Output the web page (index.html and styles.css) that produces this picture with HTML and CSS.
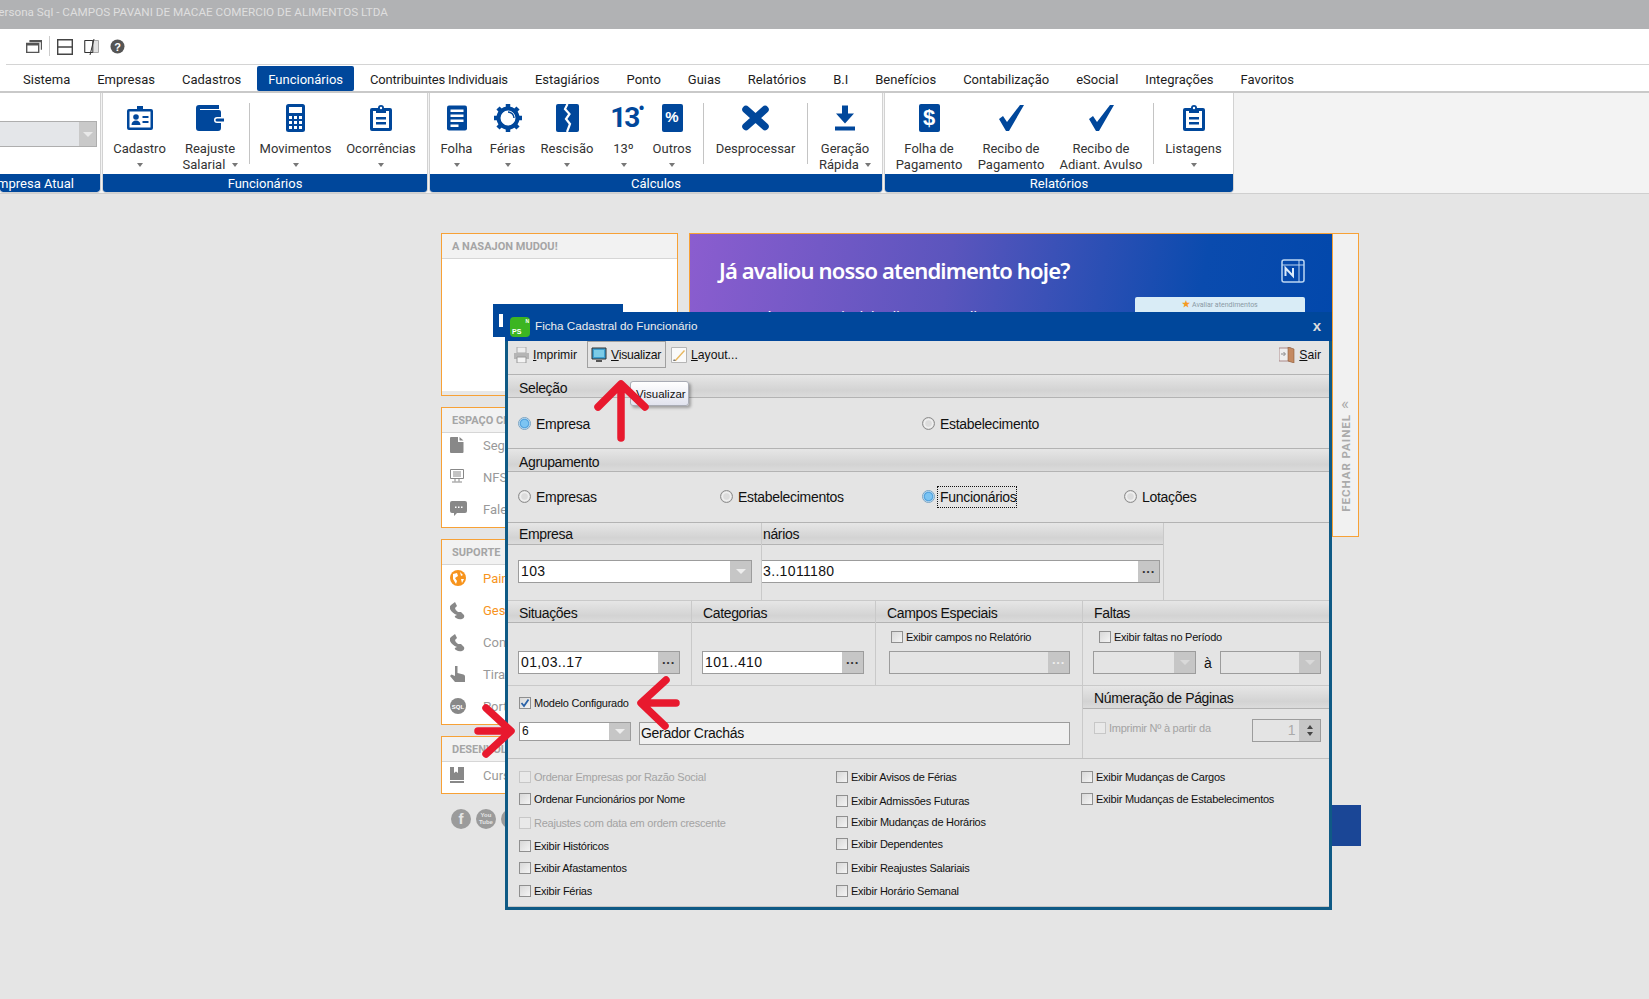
FILE: index.html
```html
<!DOCTYPE html>
<html lang="pt-BR">
<head>
  <meta charset="UTF-8" />
  <title>Persona Sql</title>
  <link rel="stylesheet" href="styles.css">
</head>
<body>
  <div class="titlebar"><span>Persona Sql - CAMPOS PAVANI DE MACAE COMERCIO DE ALIMENTOS LTDA</span></div>

  <div class="quickbar">
    <svg class="qicon" width="16" height="13" viewBox="0 0 16 13"><path d="M3.5 .7h12v9M.7 3.5h12v9H.7z" fill="none" stroke="#555" stroke-width="1.4"/><path d="M.7 3.5h12v2H.7zM3.5 .7h12v1.5h-12z" fill="#555"/></svg>
    <i class="qsep"></i>
    <svg class="qicon" width="16" height="16" viewBox="0 0 16 16"><path d="M.7.7h14.6v14.6H.7zM.7 8h14.6" fill="none" stroke="#444" stroke-width="1.4"/></svg>
    <svg class="qicon q-page" width="16" height="16" viewBox="0 0 16 16"><path d="M.5 1.5h14v12H.5z" fill="#e3e3e3" stroke="#aaa"/><path d="M.8 1.5h8v12h-8z" fill="#fff" stroke="#333"/><path d="M10 0 6 16" stroke="#333"/></svg>
    <svg class="qicon q-help" width="15" height="15" viewBox="0 0 15 15"><circle cx="7.5" cy="7.5" r="7" fill="#555"/><text x="7.5" y="11.5" class="q-help-mark">?</text></svg>
  </div>

  <nav class="menu">
    <a>Sistema</a><a>Empresas</a><a>Cadastros</a><a class="active">Funcionários</a><a class="tight">Contribuintes Individuais</a><a>Estagiários</a><a>Ponto</a><a>Guias</a><a>Relatórios</a><a>B.I</a><a>Benefícios</a><a>Contabilização</a><a>eSocial</a><a>Integrações</a><a>Favoritos</a>
  </nav>

  <div class="ribbon">
    <section class="group group-empresa">
      <div class="group-body">
        <div class="rib-combo"><b><i class="caret"></i></b></div>
      </div>
      <div class="group-label">Empresa Atual</div>
    </section>

    <section class="group group-func">
      <div class="group-body">
        <div class="rib-item">
          <svg width="26" height="24" viewBox="0 0 26 24"><path d="M10 0h6v3h8a2 2 0 0 1 2 2v17a2 2 0 0 1-2 2H2a2 2 0 0 1-2-2V5a2 2 0 0 1 2-2h8z" fill="#00479b"/><rect x="2.500" y="5.500" width="21" height="16" fill="#fff"/><circle cx="9" cy="11" r="2.800" fill="#00479b"/><path d="M4.500 19c0-3 2-4.500 4.500-4.500s4.500 1.500 4.500 4.500zM15.500 10h6v2h-6zM15.500 15h6v2h-6z" fill="#00479b"/></svg>
          <span>Cadastro</span><i class="caret"></i>
        </div>
        <div class="rib-item shift-left">
          <svg width="28" height="26" viewBox="0 0 28 26"><path d="M3 0h20v4H4v1h19a2 2 0 0 1 2 2v5h-4a3 3 0 0 0 0 6h4v5a3 3 0 0 1-3 3H3a3 3 0 0 1-3-3V3a3 3 0 0 1 3-3z" fill="#00479b"/><path d="M21 13.500h7v3h-7a1.500 1.500 0 0 1 0-3z" fill="#00479b"/></svg>
          <span>Reajuste<br>Salarial <i class="caret inline"></i></span>
        </div>
        <i class="rib-sep"></i>
        <div class="rib-item">
          <svg width="19" height="28" viewBox="0 0 19 28"><rect width="19" height="28" rx="2.500" fill="#00479b"/><rect x="3" y="3" width="13" height="6" fill="#fff"/><path d="M3 12h3v3H3zM8 12h3v3H8zM13 12h3v3h-3zM3 17h3v3H3zM8 17h3v3H8zM13 17h3v3h-3zM3 22h3v3H3zM8 22h3v3H8zM13 22h3v3h-3z" fill="#fff"/></svg>
          <span>Movimentos</span><i class="caret"></i>
        </div>
        <div class="rib-item">
          <svg width="22" height="26" viewBox="0 0 22 26"><use href="#clip"/></svg>
          <span>Ocorrências</span><i class="caret"></i>
        </div>
      </div>
      <div class="group-label">Funcionários</div>
    </section>

    <section class="group group-calc">
      <div class="group-body">
        <div class="rib-item">
          <svg width="20" height="25" viewBox="0 0 20 25"><rect width="20" height="25" rx="2" fill="#00479b"/><path d="M3.500 4h13v2.500h-13zM3.500 9h13v2.500h-13zM3.500 14h13v2.500h-13zM3.500 19h8v2.500h-8z" fill="#fff"/></svg>
          <span>Folha</span><i class="caret"></i>
        </div>
        <div class="rib-item">
          <svg width="28" height="28" viewBox="0 0 28 28"><circle cx="14" cy="14" r="9.500" fill="none" stroke="#00479b" stroke-width="4"/><path d="M14 0v6M14 22v6M0 14h6M22 14h6M4 4l4.500 4.500M19.500 19.500 24 24M24 4l-4.500 4.500M8.500 19.500 4 24" stroke="#00479b" stroke-width="4.500"/><path d="M14 8a6 6 0 0 1 6 6" fill="none" stroke="#00479b" stroke-width="1.500"/></svg>
          <span>Férias</span><i class="caret"></i>
        </div>
        <div class="rib-item">
          <svg width="23" height="28" viewBox="0 0 23 28"><rect width="23" height="28" rx="2" fill="#00479b"/><path d="M11.500 0 9 5l4.500 5L10 15l4 5-3 8" fill="none" stroke="#fff" stroke-width="2.200"/></svg>
          <span>Rescisão</span><i class="caret"></i>
        </div>
        <div class="rib-item">
          <div class="icon-13">13<sup>•</sup></div>
          <span>13º</span><i class="caret"></i>
        </div>
        <div class="rib-item shift-left-sm">
          <div class="icon-pct">%</div>
          <span>Outros</span><i class="caret"></i>
        </div>
        <i class="rib-sep"></i>
        <div class="rib-item">
          <svg width="27" height="25" viewBox="0 0 27 25"><path d="M4 4 23 21M23 4 4 21" stroke="#00479b" stroke-width="7.500" stroke-linecap="round"/></svg>
          <span>Desprocessar</span>
        </div>
        <i class="rib-sep"></i>
        <div class="rib-item">
          <svg width="20" height="25" viewBox="0 0 20 25"><path d="M7 0h6v8h6l-9 10L1 8h6zM0 21h20v4H0z" fill="#00479b"/></svg>
          <span>Geração<br>Rápida <i class="caret inline"></i></span>
        </div>
      </div>
      <div class="group-label">Cálculos</div>
    </section>

    <section class="group group-rel">
      <div class="group-body">
        <div class="rib-item">
          <div class="icon-dollar">$</div>
          <span>Folha de<br>Pagamento</span>
        </div>
        <div class="rib-item">
          <svg width="25" height="26" viewBox="0 0 25 26"><use href="#tick"/></svg>
          <span>Recibo de<br>Pagamento</span>
        </div>
        <div class="rib-item">
          <svg width="25" height="26" viewBox="0 0 25 26"><use href="#tick"/></svg>
          <span>Recibo de<br>Adiant. Avulso</span>
        </div>
        <i class="rib-sep"></i>
        <div class="rib-item">
          <svg width="22" height="26" viewBox="0 0 22 26"><use href="#clip"/></svg>
          <span>Listagens</span><i class="caret"></i>
        </div>
      </div>
      <div class="group-label">Relatórios</div>
    </section>
  </div>

  <svg class="defs" width="0" height="0">
    <symbol id="clip" viewBox="0 0 22 26"><path d="M8 3a3 3 0 0 1 6 0h6a2 2 0 0 1 2 2v19a2 2 0 0 1-2 2H2a2 2 0 0 1-2-2V5a2 2 0 0 1 2-2z" fill="#00479b"/><rect x="3" y="6" width="16" height="17" fill="#fff"/><path d="M6 4h10v4H6zM6 12h10v2.500H6zM6 17h10v2.500H6z" fill="#00479b"/><circle cx="11" cy="3" r="1.200" fill="#fff"/></symbol>
    <symbol id="tick" viewBox="0 0 25 26"><path d="M0 14l4-3 4 6L21 0h4L10 26H7z" fill="#00479b"/></symbol>
    <symbol id="phone" viewBox="0 0 15 18"><path d="M1 3 5 0l2 4-2 2q0 2 3 4l3 0 3 3q1 3-2 4-3 1-6-1t1-3q-5-2-7-6-1-2 1-4z" fill="#888"/></symbol>
  </svg>

  <main class="dash">
    <div class="dash-left">
      <div class="card card-news">
        <h4>A NASAJON MUDOU!</h4>
        <div class="news-body"></div>
      </div>
      <div class="card card-espaco">
        <h4>ESPAÇO CLIENTE</h4>
        <ul>
          <li><svg width="14" height="16" viewBox="0 0 14 16"><path d="M1 0h7v5h5.500v10a1 1 0 0 1-1 1H1a1 1 0 0 1-1-1V1a1 1 0 0 1 1-1zM9.500 0l4 3.500h-4z" fill="#888"/></svg>Segurança</li>
          <li><svg width="14" height="14" viewBox="0 0 14 14"><path d="M.5.5h13v9H.5zM5 10v2.500M9 10v2.500M2 13h10M3 3h8M3 5h8M3 7h8" fill="none" stroke="#888"/></svg>NFS-e</li>
          <li><svg width="17" height="15" viewBox="0 0 17 15"><path d="M2 0h13a2 2 0 0 1 2 2v8a2 2 0 0 1-2 2H7l-3 3v-3H2a2 2 0 0 1-2-2V2a2 2 0 0 1 2-2z" fill="#888"/><path d="M5 5.500h1.500V7H5zM8 5.500h1.500V7H8zM11 5.500h1.500V7H11z" fill="#fff"/></svg>Fale conosco</li>
        </ul>
      </div>
      <div class="card">
        <h4>SUPORTE</h4>
        <ul>
          <li class="on"><svg width="16" height="16" viewBox="0 0 16 16"><circle cx="8" cy="8" r="8" fill="#f7941d"/><path d="M3 4l4-1 1 3-3 2 2 3-1 3-3-5zM10 2l3 3-2 1zM11 9l3 0-2 4z" fill="#fff"/></svg>Painel</li>
          <li class="on"><svg width="15" height="18" viewBox="0 0 15 18"><use href="#phone"/></svg>Gestão</li>
          <li><svg width="15" height="18" viewBox="0 0 15 18"><use href="#phone"/></svg>Consultoria</li>
          <li><svg width="15" height="16" viewBox="0 0 15 16"><path d="M5 0h2.500v7l6 1.500q1.500.5 1.500 2V16H5L0 10l1.500-1.500L5 10z" fill="#888"/></svg>Tira-dúvidas</li>
          <li><svg width="16" height="16" viewBox="0 0 16 16"><circle cx="8" cy="8" r="8" fill="#888"/><text x="8" y="10.500" class="sql-mark">SQL</text></svg>Portal</li>
        </ul>
      </div>
      <div class="card">
        <h4>DESENVOLVIMENTO</h4>
        <ul>
          <li><svg width="14" height="16" viewBox="0 0 14 16"><path d="M0 0h4v6l2-1.500L8 6V0h6v13H0zM0 14h14v2H0z" fill="#888"/></svg>Cursos</li>
        </ul>
      </div>
      <div class="social">
        <span>f</span><span class="yt">You<br>Tube</span><span></span>
      </div>
    </div>

    <div class="dash-right">
      <div class="banner-wrap">
        <div class="banner">
          <h1>Já avaliou nosso atendimento hoje?</h1>
          <svg class="banner-logo" width="24" height="24" viewBox="0 0 24 24"><rect x="1" y="1" width="22" height="22" rx="2" fill="none" stroke="#bcd6f2" stroke-width="1.500"/><path d="M1 6h22M18 1v22" stroke="#bcd6f2"/><path d="M4.500 17V9l7.500 8V9" fill="none" stroke="#dcebfa" stroke-width="2"/></svg>
          <p>Acesse o painel de clientes e avalie agora</p>
          <div class="banner-chip"><b>★</b> Avaliar atendimentos</div>
        </div>
        <div class="side-tab"><span>FECHAR PAINEL</span><em>«</em></div>
      </div>
      <div class="promo"></div>
    </div>
  </main>

  <div class="modal-back"></div>

  <div class="modal">
    <div class="modal-title">
      <div class="app-icon"><b>PS</b><i>N</i></div>
      <span>Ficha Cadastral do Funcionário</span>
      <em>x</em>
    </div>
    <div class="modal-body">
      <div class="tools">
        <a class="tool">
          <svg width="15" height="16" viewBox="0 0 15 16"><path d="M3 0h9v6H3z" fill="#eee" stroke="#aaa"/><path d="M0 6h15v6H0z" fill="#b5b5b5"/><path d="M3 10h9v6H3z" fill="#f4f4f4" stroke="#999"/></svg>
          <span><u>I</u>mprimir</span>
        </a>
        <a class="tool tool-on">
          <svg width="16" height="15" viewBox="0 0 16 15"><path d="M1 1h14v11H1z" fill="#3d9fd0" stroke="#333"/><path d="M3 3h10v7H3z" fill="#7ccbe6"/><path d="M5 13h6v2H5z" fill="#555"/></svg>
          <span><u>V</u>isualizar</span>
        </a>
        <a class="tool">
          <svg width="16" height="16" viewBox="0 0 16 16"><path d="M.5.500h15v15H.500z" fill="#fafafa" stroke="#b5b5b5"/><path d="M3 14 13 3l1 1L5 14z" fill="#e8b860"/><path d="M2 14l1-2 2 2z" fill="#777"/></svg>
          <span><u>L</u>ayout...</span>
        </a>
        <a class="tool tool-exit">
          <svg width="16" height="16" viewBox="0 0 16 16"><path d="M0 1h12v13H0z" fill="#eee" stroke="#a88"/><path d="M9 0l6 2v14l-6-2z" fill="#c48a62" stroke="#8d5a3a" stroke-width=".6"/><path d="M2 7h4M4.500 5 6.500 7l-2 2" fill="none" stroke="#888"/></svg>
          <span><u>S</u>air</span>
        </a>
      </div>

      <h3 class="head head-big">Seleção</h3>
      <div class="radios radios-sel">
        <label class="radio on wide"><i></i>Empresa</label>
        <label class="radio"><i></i>Estabelecimento</label>
      </div>

      <h3 class="head head-big">Agrupamento</h3>
      <div class="radios radios-grp">
        <label class="radio"><i></i>Empresas</label>
        <label class="radio"><i></i>Estabelecimentos</label>
        <label class="radio on"><i></i><span class="focus">Funcionários</span></label>
        <label class="radio"><i></i>Lotações</label>
      </div>

      <div class="row row-2">
        <div class="panel p-empresa">
          <h3 class="head">Empresa</h3>
          <div class="panel-in">
            <div class="field f-empresa"><span>103</span><b><i class="caret light"></i></b></div>
          </div>
        </div>
        <div class="panel p-func">
          <h3 class="head head-cut">nários</h3>
          <div class="panel-in">
            <div class="field f-func"><span>3..1011180</span><b>···</b></div>
          </div>
        </div>
      </div>

      <div class="row row-3">
        <div class="panel">
          <h3 class="head">Situações</h3>
          <div class="panel-in end">
            <div class="field f-sit"><span>01,03..17</span><b>···</b></div>
          </div>
        </div>
        <div class="panel">
          <h3 class="head">Categorias</h3>
          <div class="panel-in end">
            <div class="field f-cat"><span>101..410</span><b>···</b></div>
          </div>
        </div>
        <div class="panel">
          <h3 class="head">Campos Especiais</h3>
          <div class="panel-in end">
            <label class="check c-campos"><i></i>Exibir campos no Relatório</label>
            <div class="field f-campos off"><span></span><b>···</b></div>
          </div>
        </div>
        <div class="panel">
          <h3 class="head">Faltas</h3>
          <div class="panel-in end">
            <label class="check c-faltas"><i></i>Exibir faltas no Período</label>
            <div class="faltas-range">
              <div class="field f-falta off"><span></span><b><i class="caret hollow"></i></b></div>
              <span class="a-mark">à</span>
              <div class="field f-falta off"><span></span><b><i class="caret hollow"></i></b></div>
            </div>
          </div>
        </div>
      </div>

      <div class="row row-4">
        <div class="panel p-modelo">
          <label class="check checked"><i><svg width="10" height="10" viewBox="0 0 10 10"><path d="M1.500 5 4 8l4.500-6.500" fill="none" stroke="#2a62a8" stroke-width="1.800"/></svg></i>Modelo Configurado</label>
          <div class="modelo-fields">
            <div class="field f-modelo"><span>6</span><b><i class="caret light"></i></b></div>
            <div class="field f-gerador"><span>Gerador Crachás</span></div>
          </div>
        </div>
        <div class="panel p-pages">
          <h3 class="head">Númeração de Páginas</h3>
          <div class="pages-in">
            <label class="check disabled"><i></i>Imprimir Nº à partir da</label>
            <div class="field f-spin off"><span>1</span><b><i class="up"></i><i class="down"></i></b></div>
          </div>
        </div>
      </div>

      <div class="options">
        <div class="opt-col">
          <label class="check disabled"><i></i>Ordenar Empresas por Razão Social</label>
          <label class="check"><i></i>Ordenar Funcionários por Nome</label>
          <label class="check disabled g24"><i></i>Reajustes com data em ordem crescente</label>
          <label class="check g23"><i></i>Exibir Históricos</label>
          <label class="check"><i></i>Exibir Afastamentos</label>
          <label class="check g23"><i></i>Exibir Férias</label>
        </div>
        <div class="opt-col">
          <label class="check"><i></i>Exibir Avisos de Férias</label>
          <label class="check g24"><i></i>Exibir Admissões Futuras</label>
          <label class="check g21"><i></i>Exibir Mudanças de Horários</label>
          <label class="check"><i></i>Exibir Dependentes</label>
          <label class="check g24"><i></i>Exibir Reajustes Salariais</label>
          <label class="check g23"><i></i>Exibir Horário Semanal</label>
        </div>
        <div class="opt-col">
          <label class="check"><i></i>Exibir Mudanças de Cargos</label>
          <label class="check"><i></i>Exibir Mudanças de Estabelecimentos</label>
        </div>
      </div>
    </div>
  </div>

  <div class="tooltip">Visualizar</div>

  <!-- setas vermelhas desenhadas por cima da captura -->
  <svg class="arrows" width="1649" height="999" viewBox="0 0 1649 999">
    <g fill="none" stroke="#e8192e" stroke-width="7.500" stroke-linecap="round" stroke-linejoin="round">
      <path d="M621 438V385M598 407 621 384 645 407"/>
      <path d="M676 703H642M666 680 641 703 665 726"/>
      <path d="M478 731H510M486 708 511 731 486 754"/>
    </g>
  </svg>
</body>
</html>
```

FILE: styles.css
```css
* {
  box-sizing: border-box;
}

html, body {
  margin: 0;
  height: 999px;
  overflow: hidden;
}

body {
  position: relative;
  width: 1649px;
  background: #e5e5e5;
  font-family: Roboto, "Liberation Sans", sans-serif;
  color: #222;
}

.defs {
  position: absolute;
}

/* topo */
.titlebar {
  height: 29px;
  background: #b1b2b4;
  color: #dfdfdf;
  font-size: 11.7px;
  line-height: 24px;
  overflow: hidden;
  white-space: nowrap;
}

.titlebar span {
  margin-left: -9px;
}

.quickbar {
  height: 36px;
  background: #fff;
  display: flex;
  align-items: center;
  padding: 0 0 2px 26px;
  position: relative;
}

.quickbar::after {
  content: "";
  position: absolute;
  left: 6px;
  right: 0;
  bottom: 0;
  height: 1px;
  background: #d4d4d4;
}

.qicon {
  margin-top: 1px;
}

.qsep {
  width: 1px;
  height: 20px;
  background: #ccc;
  margin: 0 7px;
}

.q-page {
  margin-left: 11px;
}

.q-help {
  margin-left: 10px;
}

.q-help-mark {
  fill: #fff;
  font: bold 11px "Liberation Sans", sans-serif;
  text-anchor: middle;
}

.menu {
  height: 28px;
  background: #fff;
  display: flex;
  align-items: center;
  padding-left: 12px;
  gap: 5px;
  border-bottom: 2px solid #c9c9c9;
  font-size: 13px;
}

.menu a {
  padding: 0 11px;
  height: 25px;
  line-height: 27px;
  margin-top: 1px;
  color: #1d1d1d;
  white-space: nowrap;
}

.menu a.tight {
  letter-spacing: -.2px;
}

.menu a.active {
  background: #00479b;
  color: #fff;
  border-radius: 2px;
}

/* ribbon */
.ribbon {
  height: 101px;
  background: #f3f3f3;
  display: flex;
  gap: 3px;
  border-bottom: 1px solid #cfcfcf;
}

.group {
  height: 99px;
  background: #fff;
  display: flex;
  flex-direction: column;
  box-shadow: 1px 0 0 #d2d2d2, -1px 0 0 #d2d2d2, 0 1px 0 #d2d2d2;
  border-radius: 0 0 3px 3px;
}

.group-body {
  height: 81px;
  display: grid;
  align-items: start;
}

.group-label {
  height: 18px;
  line-height: 20px;
  background: #00479b;
  color: #fff;
  font-size: 13px;
  text-align: center;
  border-radius: 0 0 3px 3px;
}

.group-empresa {
  width: 100px;
  overflow: hidden;
}

.group-empresa .group-label {
  display: flex;
  justify-content: flex-end;
  padding-right: 26px;
  white-space: nowrap;
}

.group-func {
  width: 324px;
}

.group-func .group-body {
  grid-template-columns: 73px 73px 1px 91px 80px;
}

.group-calc {
  width: 452px;
}

.group-calc .group-body {
  grid-template-columns: 53px 49px 70px 43px 58px 1px 103px 1px 74px;
}

.group-rel {
  width: 348px;
}

.group-rel .group-body {
  grid-template-columns: 88px 76px 104px 1px 79px;
}

.rib-combo {
  width: 97px;
  height: 26px;
  margin-top: 28px;
  background: #e4e6e9;
  border: 1px solid #aeaeae;
  border-left: 0;
  display: flex;
  justify-content: flex-end;
}

.rib-combo b {
  width: 17px;
  background: #c9c9c9;
  display: flex;
  align-items: center;
  justify-content: center;
}

.rib-item {
  height: 81px;
  display: flex;
  flex-direction: column;
  align-items: center;
  font-size: 13px;
  line-height: 16px;
  color: #333;
  text-align: center;
  white-space: nowrap;
  padding-top: 11px;
}

.rib-item.shift-left {
  padding-right: 5px;
}

.rib-item.shift-left-sm {
  padding-right: 4px;
}

.rib-item > svg,
.rib-item > div {
  height: 28px;
  margin-bottom: 9px;
  flex: none;
}

.rib-sep {
  width: 1px;
  height: 61px;
  margin-top: 10px;
  background: #c4c4c4;
}

.caret {
  display: block;
  width: 0;
  height: 0;
  margin-top: 6px;
  border: 3.5px solid transparent;
  border-top: 4px solid #777;
  border-bottom: 0;
}

.caret.inline {
  display: inline-block;
  margin: 0 0 2px 3px;
  vertical-align: middle;
}

.rib-combo .caret {
  margin-top: 0;
  border-top-color: #e9e9e9;
  border-width: 5px 5px 0;
}

.icon-13 {
  font: bold 28px/28px Roboto, sans-serif;
  letter-spacing: -2px;
  color: #00479b;
  position: relative;
  left: 3px;
}

.icon-13 sup {
  font-size: 18px;
  line-height: 0;
  vertical-align: 12px;
}

.icon-pct {
  width: 21px;
  background: #00479b;
  border-radius: 2px;
  color: #fff;
  font: bold 15px/26px "Liberation Sans", sans-serif;
}

.icon-dollar {
  width: 21px;
  background: #00479b;
  border-radius: 2px;
  color: #fff;
  font: bold 22px/28px "Liberation Sans", sans-serif;
}

/* fundo do painel */
.dash {
  display: flex;
  gap: 11px;
  padding: 39px 0 0 441px;
}

.dash-left {
  width: 237px;
  display: flex;
  flex-direction: column;
  gap: 11px;
}

.card {
  background: #fff;
  border: 1px solid #f7a136;
  font-size: 13px;
  color: #999;
}

.card h4 {
  margin: 0;
  height: 25px;
  line-height: 25px;
  padding-left: 10px;
  background: #f2f2f2;
  border-bottom: 1px solid #d6d6d6;
  font-size: 11px;
  color: #a5a5a5;
}

.news-body {
  height: 136px;
  border-bottom: 4px solid #e8e8e8;
}

.card ul {
  list-style: none;
  margin: -3px 0 0;
  padding: 0 0 2px;
}

.card-espaco ul {
  margin-top: -4px;
}

.card li {
  height: 32px;
  display: flex;
  align-items: center;
  padding-left: 41px;
  position: relative;
}

.card li svg {
  position: absolute;
  left: 8px;
  top: 8px;
}

.card li.on {
  color: #f7941d;
}

.social {
  display: flex;
  gap: 5px;
  margin: 4px 0 0 10px;
}

.social span {
  width: 20px;
  height: 20px;
  border-radius: 50%;
  background: #9b9b9b;
  color: #e5e5e5;
  font: bold 15px/20px "Liberation Sans", sans-serif;
  text-align: center;
}

.social .yt {
  font-size: 6px;
  line-height: 7px;
  padding-top: 3px;
}

.dash-right {
  width: 670px;
}

.banner-wrap {
  height: 304px;
  display: flex;
  border: 1px solid #f7a136;
  background: #fff;
}

.banner {
  width: 642px;
  position: relative;
  background: linear-gradient(100deg, #8b5dcf 0%, #5b55bd 38%, #0a4bae 75%, #0047ab 100%);
  color: #fff;
  padding: 21px 0 0 29px;
  overflow: hidden;
}

.banner h1 {
  margin: 0;
  font: 600 22px/30px "Noto Sans", sans-serif;
  letter-spacing: -.85px;
}

.banner p {
  margin: 24px 0 0 46px;
  font-size: 14px;
}

.banner-logo {
  position: absolute;
  left: 591px;
  top: 25px;
}

.banner-chip {
  position: absolute;
  left: 445px;
  top: 63px;
  width: 170px;
  height: 30px;
  background: #d9ecf6;
  border-radius: 2px 2px 0 0;
  color: #8a9aa5;
  font-size: 7px;
  text-align: center;
  padding-top: 2px;
}

.banner-chip b {
  color: #f59a23;
  font-size: 9px;
}

.side-tab {
  flex: 1;
  background: #f1f1f1;
  border-left: 1px solid #f7a136;
  position: relative;
}

.side-tab span {
  position: absolute;
  left: 6px;
  bottom: 24px;
  writing-mode: vertical-rl;
  transform: rotate(180deg);
  font-size: 11.5px;
  font-weight: bold;
  letter-spacing: 1px;
  color: #aaa;
  white-space: nowrap;
}

.side-tab em {
  position: absolute;
  left: 8px;
  top: 159px;
  font-style: normal;
  font-size: 17px;
  line-height: 20px;
  color: #aaa;
}

.promo {
  width: 130px;
  height: 41px;
  margin: 268px 0 0 542px;
  background: #1a4696;
}

/* janela da ficha */
.modal-back {
  position: absolute;
  left: 493px;
  top: 304px;
  width: 130px;
  height: 33px;
  background: #00479b;
}

.modal-back::after {
  content: "";
  position: absolute;
  left: 6px;
  top: 10px;
  width: 4px;
  height: 13px;
  background: #fff;
}

.modal {
  position: absolute;
  left: 505px;
  top: 312px;
  width: 827px;
  height: 598px;
  background: #0f5a85;
  padding: 0 3px 3px;
  font-family: "Liberation Sans", sans-serif;
  color: #111;
}

.modal-title {
  height: 29px;
  margin: 0 -3px;
  background: #00479b;
  color: #eee;
  display: flex;
  align-items: center;
  padding: 0 0 2px 5px;
  font-size: 11.7px;
}

.app-icon {
  width: 20px;
  height: 20px;
  background: #3cb521;
  border-radius: 4px;
  position: relative;
  margin: 2px 5px 0 0;
  color: #fff;
}

.app-icon b {
  position: absolute;
  left: 2px;
  bottom: 1px;
  font-size: 7px;
  line-height: 8px;
}

.app-icon i {
  position: absolute;
  right: 1px;
  top: 1px;
  font-size: 5px;
  line-height: 6px;
  font-style: normal;
  font-weight: bold;
}

.modal-title em {
  margin-left: auto;
  margin-right: 11px;
  font: bold 15px/15px "Liberation Sans", sans-serif;
  color: #ddd;
}

.modal-body {
  height: 566px;
  background: #e4e4e4;
  font-size: 14px;
  border-bottom: 1px solid #c4c4c4;
}

.tools {
  height: 34px;
  display: flex;
  align-items: flex-start;
  padding-left: 6px;
  border-bottom: 1px solid #b3b3b3;
  font-size: 12.2px;
}

.tool {
  height: 27px;
  display: flex;
  align-items: center;
  gap: 4px;
}

.tool-on {
  width: 79px;
  border: 1px solid #a0a0a0;
  padding-left: 3px;
  margin: 0 5px 0 10px;
  letter-spacing: -.25px;
}

.tool-exit {
  margin-left: auto;
  margin-right: 8px;
}

.head {
  margin: 0;
  height: 23px;
  line-height: 24px;
  padding-left: 11px;
  font-size: 14px;
  font-weight: normal;
  letter-spacing: -.35px;
  background: linear-gradient(#e6e6e6, #d3d3d3 70%, #dbdbdb);
  border-bottom: 1px solid #b3b3b3;
}

.head-big {
  line-height: 26px;
}

.radios {
  display: grid;
  grid-template-columns: repeat(4, 202px);
  align-items: center;
  padding-left: 10px;
  border-bottom: 1px solid #b3b3b3;
  letter-spacing: -.3px;
}

.radios-sel {
  height: 51px;
  padding-top: 2px;
}

.radios-grp {
  height: 51px;
}

.wide {
  grid-column: span 2;
}

.radio {
  display: flex;
  align-items: center;
  gap: 5px;
  margin-top: -1px;
}

.radio i {
  width: 13px;
  height: 13px;
  border-radius: 50%;
  background: radial-gradient(circle, #dcdcdc 35%, #f2f2f2 55%, #c2c2c2 80%);
  border: 1px solid #8d8d8d;
}

.radio.on i {
  background: radial-gradient(circle, #7cc4f2 40%, #4d9fdc 55%, #d5e8f5 70%);
  border-color: #7aa4c4;
}

.focus {
  outline: 1px dotted #111;
  margin-left: -2px;
  padding: 1px 0 1px 2px;
  width: 78px;
  line-height: 18px;
}

.row {
  display: flex;
}

.panel {
  display: flex;
  flex-direction: column;
  border-right: 1px solid #c9c9c9;
}

.panel-in {
  flex: 1;
  display: flex;
  flex-direction: column;
}

.panel-in.end {
  justify-content: flex-end;
  padding-bottom: 11px;
}

.row-2 {
  height: 78px;
  border-bottom: 1px solid #c9c9c9;
}

.row-2 .head {
  height: 22px;
  line-height: 22px;
}

.row-2 .panel-in {
  padding-top: 15px;
}

.p-empresa {
  width: 254px;
}

.p-empresa .panel-in {
  padding-left: 10px;
}

.p-func {
  width: 402px;
}

.head.head-cut {
  padding-left: 1px;
}

.field {
  height: 23px;
  display: flex;
  background: #fff;
  border: 1px solid #9c9c9c;
  font-size: 14px;
  line-height: 21px;
}

.field span {
  flex: 1;
  padding-left: 2px;
  letter-spacing: .35px;
  white-space: nowrap;
  overflow: hidden;
}

.field b {
  width: 21px;
  background: #c6c6c6;
  display: flex;
  align-items: center;
  justify-content: center;
  font-size: 13px;
  color: #333;
}

.field .caret {
  margin: 0;
}

.caret.light {
  border-width: 5px 5px 0;
  border-top-color: #eee;
}

.caret.hollow {
  border-width: 5px 5px 0;
  border-top-color: #d9d9d9;
}

.field.off {
  background: #e4e4e4;
}

.field.off b {
  color: #eee;
}

.f-empresa {
  width: 234px;
}

.f-func {
  width: 398px;
  border-left: 0;
}

.f-func span {
  padding-left: 1px;
}

.row-3 {
  height: 85px;
  border-bottom: 1px solid #c9c9c9;
}

.row-3 .head {
  height: 22px;
}

.row-3 .panel:nth-child(1),
.row-3 .panel:nth-child(2) {
  width: 184px;
}

.row-3 .panel:nth-child(3) {
  width: 207px;
}

.row-3 .panel:nth-child(4) {
  width: 246px;
  border-right: 0;
}

.f-sit,
.f-cat {
  width: 162px;
  margin-left: 10px;
}

.f-campos {
  width: 181px;
  margin-left: 13px;
}

.faltas-range {
  display: flex;
  align-items: center;
  margin-left: 10px;
}

.f-falta {
  width: 103px;
}

.a-mark {
  width: 24px;
  text-align: center;
  font-size: 14px;
}

.f-falta:last-child {
  width: 101px;
}

.check {
  display: flex;
  align-items: center;
  gap: 3px;
  height: 14px;
  font-size: 11px;
  letter-spacing: -.24px;
  white-space: nowrap;
}

.check i {
  width: 12px;
  height: 12px;
  flex: none;
  background: linear-gradient(135deg, #d8d8d8, #f4f4f4);
  border: 1px solid #8f8f8f;
  display: flex;
  align-items: center;
  justify-content: center;
}

.check.disabled {
  color: #a3a3a3;
}

.check.disabled i {
  border-color: #c7c7c7;
  background: #e9e9e9;
}

.c-campos {
  margin: 0 0 7px 15px;
}

.c-faltas {
  margin: 0 0 7px 16px;
}

.row-4 {
  height: 73px;
  border-bottom: 1px solid #c0c0c0;
}

.p-modelo {
  width: 575px;
  padding: 10px 0 0 11px;
}

.modelo-fields {
  display: flex;
  gap: 8px;
  margin-top: 12px;
  align-items: flex-start;
}

.f-modelo {
  width: 112px;
  height: 19px;
  font-size: 12px;
  line-height: 17px;
}

.f-gerador {
  width: 431px;
  background: #f0f0f0;
}

.f-gerador span {
  padding-left: 1px;
  letter-spacing: -.3px;
}

.p-pages {
  width: 246px;
  border-right: 0;
}

.pages-in {
  display: flex;
  align-items: center;
  padding: 10px 8px 0 11px;
  justify-content: space-between;
}

.pages-in .check {
  margin-top: -6px;
}

.f-spin {
  width: 69px;
  justify-content: flex-end;
  color: #aaa;
}

.f-spin span {
  text-align: right;
  padding-right: 3px;
}

.f-spin b {
  flex-direction: column;
  gap: 3px;
}

.f-spin .up,
.f-spin .down {
  width: 0;
  height: 0;
  border: 3px solid transparent;
}

.f-spin .up {
  border-bottom: 4px solid #444;
  border-top: 0;
}

.f-spin .down {
  border-top: 4px solid #444;
  border-bottom: 0;
}

.options {
  display: grid;
  grid-template-columns: 317px 245px 1fr;
  padding: 11px 0 0 11px;
}

.opt-col {
  display: flex;
  flex-direction: column;
  gap: 8px;
}

.g21 {
  margin-top: -1px;
}

.g23 {
  margin-top: 1px;
}

.g24 {
  margin-top: 2px;
}

/* por cima da janela */
.tooltip {
  position: absolute;
  left: 630px;
  top: 381px;
  width: 59px;
  height: 25px;
  padding: 6px 0 0 5px;
  background: linear-gradient(#fff, #e1e3ee);
  border: 1px solid #a9acb5;
  border-radius: 3px;
  box-shadow: 2px 2px 3px rgba(0, 0, 0, .3);
  font: 11.5px/13px "Liberation Sans", sans-serif;
  color: #111;
}

.arrows {
  position: absolute;
  left: 0;
  top: 0;
  pointer-events: none;
}

.sql-mark {
  fill: #fff;
  font: bold 6px "Liberation Sans", sans-serif;
  text-anchor: middle;
}
```
